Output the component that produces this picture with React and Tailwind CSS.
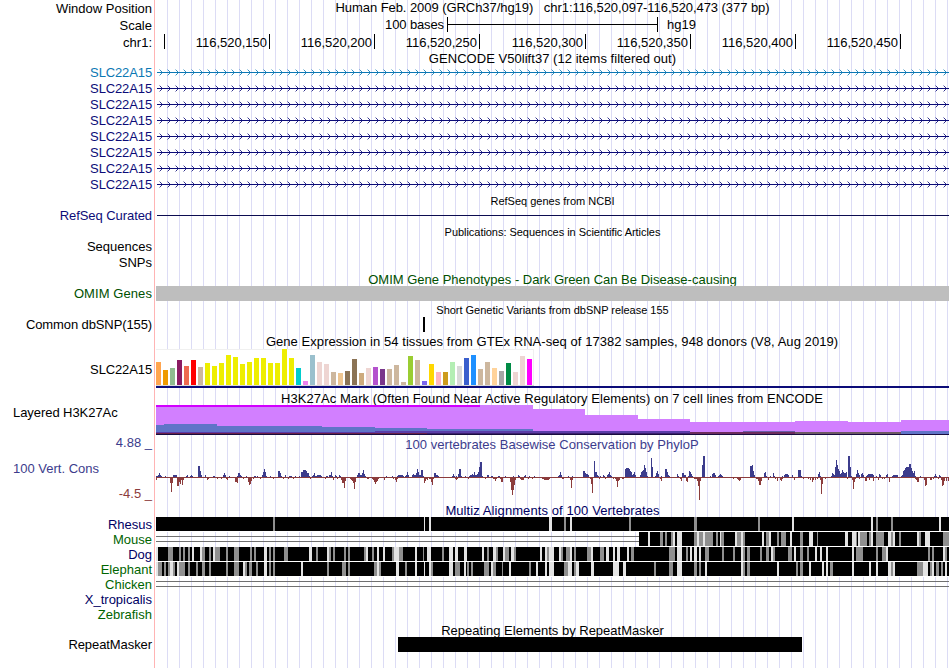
import clsx from 'clsx';

const LEFT = 156;

const TICKS = ['116,520,150', '116,520,200', '116,520,250', '116,520,300', '116,520,350', '116,520,400', '116,520,450'];

const GENES = ['#0c78b4', '#0c0c78', '#0c0c78', '#0c0c78', '#0c0c78', '#0c0c78', '#0c0c78', '#0c0c78'];

// [height, color] per tissue
const TISSUES = [
  [23, '#ffa54f'], [15, '#ee9a00'], [17, '#8fbc8f'], [25, '#8b1c62'], [19, '#ee6a50'], [25, '#ff0000'], [18, '#cdb79e'],
  [22, '#eeee00'], [19, '#eeee00'], [22, '#eeee00'], [30, '#eeee00'], [28, '#eeee00'], [21, '#eeee00'], [23, '#eeee00'],
  [27, '#eeee00'], [27, '#eeee00'], [22, '#eeee00'], [22, '#eeee00'], [36, '#eeee00'], [27, '#eeee00'], [17, '#00cdcd'],
  [4, '#ee82ee'], [30, '#9ac0cd'], [23, '#eed5d2'], [21, '#eed5d2'], [13, '#cdb79e'], [12, '#eec591'], [14, '#8b7355'],
  [26, '#8b7355'], [12, '#cdaa7d'], [17, '#eed5d2'], [18, '#b452cd'], [16, '#7a378b'], [16, '#cdb79e'], [20, '#cdb79e'],
  [3, '#cdb79e'], [29, '#9acd32'], [25, '#cdb79e'], [4, '#7a67ee'], [21, '#ffd700'], [13, '#ffb6c1'], [13, '#cd9b1d'],
  [23, '#b4eeb4'], [19, '#d9d9d9'], [27, '#3a5fcd'], [30, '#1e90ff'], [16, '#cdb79e'], [23, '#cdb79e'], [17, '#ffd39b'],
  [14, '#a6a6a6'], [22, '#008b45'], [13, '#eed5d2'], [29, '#eed5d2'], [26, '#ff00ff'],
];

// [x0, x1, y0, y1, color]
const H3K27 = [
  [156, 533, 405, 434, '#d27fff'], [533, 585, 409, 434, '#d27fff'], [585, 638, 415, 434, '#d27fff'],
  [638, 690, 419, 434, '#d27fff'], [690, 795, 422, 434, '#d27fff'], [795, 848, 421, 434, '#d27fff'],
  [848, 901, 422, 434, '#d27fff'], [901, 949, 420, 434, '#d27fff'], [156, 480, 405, 407, '#d200ff'],
  [156, 164, 425, 434, '#6074c8'], [164, 217, 424, 434, '#6074c8'], [217, 322, 426, 434, '#6074c8'],
  [322, 375, 427, 434, '#6074c8'], [375, 427, 428, 434, '#6074c8'], [427, 533, 429, 434, '#6074c8'],
  [585, 690, 431, 434, '#6074c8'], [743, 795, 431, 434, '#6a5aa8'], [795, 901, 432, 434, '#6c5864'],
  [901, 949, 431, 434, '#6074c8'],
  [156, 375, 432, 433, '#5a3ca8'], [375, 690, 431, 433, '#5a3ca8'], [690, 795, 432, 434, '#6c2c5c'],
  [156, 427, 433, 434, '#6c2048'], [427, 690, 433, 434, '#3c2070'], [156, 949, 434, 435, '#180c40'],
];

// x:height, positive above the axis
const CONS_UP = `156:1 157:1 158:2 159:4 160:2 161:1 165:1 173:2 174:2 175:2 176:2 186:1 187:2 190:1 191:2 192:1 198:11 199:11 200:6 201:2
205:2 213:1 214:1 223:2 224:4 225:2 229:1 237:1 238:4 239:4 240:2 241:1 246:1 254:1 255:1 257:1 262:2 263:5 264:8 265:5 266:1 270:1 278:6 279:6 280:4 281:1
285:2 289:1 290:1 291:1 295:1 299:1 301:5 302:5 303:7 304:7 305:7 306:6 307:4 308:4 309:1 312:1 313:2 314:4 315:1 316:1 317:2 318:2 319:2 320:2 321:1
326:1 327:1 329:2 330:2 331:5 332:1 335:2 336:1 339:2 340:1 357:2 358:4 359:4 360:2 361:2 362:4 363:7 364:3 365:1 386:1 392:1 397:1 398:2 399:2 400:2 401:2 402:2 403:1
405:1 406:2 407:5 408:2 412:2 413:3 414:2 415:2 416:4 417:8 418:5 419:2 420:2 421:7 422:7 423:1 434:4 435:4 436:2 437:2 438:1 452:1 453:3 454:1 456:1 458:3 459:8 460:8 461:1
465:1 469:1 470:2 471:2 472:3 473:2 474:5 475:2 476:2 477:3 478:5 479:10 480:15 481:15 482:1 487:2 488:2 491:1 492:1 498:1 499:1 505:1 513:1 518:2 519:1 524:1 525:2 529:1 534:1 558:1 559:2 560:5 561:2
568:1 572:1 583:6 584:6 585:4 586:3 587:3 588:2 594:16 595:5 596:5 597:2 598:1 600:1 603:2 604:1 607:2 608:3 609:5 610:2 611:1
625:8 626:9 627:9 628:9 629:8 630:6 631:5 632:2 633:3 634:5 635:2 640:2 641:5 642:6 643:7 644:12 645:9 646:5 647:1 651:19 652:10 655:1 656:4 657:6 658:3 661:1
665:8 666:8 667:5 668:2 669:1 677:3 678:1 682:4 683:4 684:2 685:2 688:1 689:6 690:5 691:3 692:1 702:12 703:21 704:21 710:1 712:3 713:4 714:4 715:2 718:1 719:2 720:3 721:2 722:1
750:11 751:11 752:12 753:6 754:2 764:4 765:5 766:1 770:1 773:4 774:1 782:1 784:2 785:3 786:3 787:3 788:2 792:2 798:7 799:7 800:7 801:1 818:3 819:5 820:1
831:1 832:4 833:3 834:2 835:10 836:17 837:12 838:8 839:6 840:3 841:4 842:7 843:5 844:4 845:4 846:5 848:21 849:21 850:10 851:1 856:3 857:7 858:4 859:2 861:3 862:4 863:2
866:1 867:2 868:3 869:3 870:3 871:3 872:3 873:2 876:1 879:3 880:2 886:2 887:3 892:1 893:2 894:2 895:2 896:2 897:2 901:1 902:2 903:6 904:7 905:9 906:10 907:10 908:10 909:13 910:13 911:9 912:6 913:4 914:6 915:1
920:1 934:1 935:3 936:1 939:2 940:1`;

const CONS_DOWN = `156:3 170:6 171:15 172:6 177:9 178:9 179:5 180:7 181:3 182:8 183:3 207:3 208:2 217:2 221:2 226:2 227:3 228:1 235:5 236:5 237:6 243:2 248:5 249:8 250:7 251:4 253:2
260:2 273:2 274:1 283:2 288:2 293:2 310:2 325:2 333:3 334:1 337:2 341:3 342:6 343:6 344:11 345:4 350:2 351:3 352:4 353:6 354:12 355:5 367:2 368:2 372:2 373:3 374:5 375:7 376:5 377:4 378:2 384:3
393:2 395:3 396:5 397:2 424:6 425:4 426:2 427:3 429:2 430:2 431:5 432:8 433:2 455:2 456:3 457:2 468:2 485:2 493:2 494:2 495:4 496:2 500:2 501:5 502:5 510:5 511:13 512:18 513:13 514:8 515:3 520:2 521:3 522:3 523:3
528:2 532:2 542:2 543:2 544:3 545:3 546:3 547:3 548:3 549:2 562:2 563:2 570:3 571:11 572:3 590:2 591:7 592:16 599:2 605:2 613:2 615:2 616:4 617:10 618:4 619:3 621:1 622:2 623:2 660:2 661:4 680:2 681:4 686:4 687:5
694:2 695:2 696:2 697:4 698:9 699:23 700:4 733:2 737:2 738:3 739:4 740:3 756:2 757:2 758:4 759:8 760:8 761:4 768:3 775:2 777:4 780:3 781:4 782:2 794:3 803:2 808:2 810:3 812:5 813:3 815:3 817:2 820:3 821:17 822:7 825:2
847:2 852:3 853:12 854:5 855:2 859:2 865:4 866:4 869:3 873:4 878:3 882:2 884:2 889:5 915:2 916:3 917:5 918:5 924:3 925:9 926:8 930:3 931:3 933:2 938:2 941:3 942:9 943:8 944:4 946:4 948:4`;

// m = partial identity, l = mismatch
const RHESUS = 'm273-275 l424-425 l429-431 l549-552 m564-566 l570-572 m629-631 m694-697 m758-760 l792-794 l871-873 m876-878 m891-893 l939-941';
const MOUSE = `l648-650 m660-663 m665-667 m671-673 l673-675 l677-682 m694-697 l697-699 m699-703 l703-705 m705-713 m716-718 l720-721 m721-724 l735-737 m737-741
l741-743 m743-745 l762-764 m766-769 l769-771 m777-779 m781-786 l790-792 m800-803 l809-813 m817-818 l845-848 l852-856 m856-857 l858-860 m860-867 m869-871 l871-873
m876-884 l888-891 m891-893 l893-895 m899-901 l917-919 m919-921 l925-930 m943-949`;
const DOG = `l156-158 m168-173 m179-181 m183-185 m188-190 l192-194 l200-202 m202-205 m209-211 l213-215 m215-220 m226-228 m234-239 m250-252 m254-256 l264-267 m269-271
m273-275 m284-288 l309-312 m316-318 l327-329 m329-331 m333-335 m344-346 m348-350 m364-366 l366-368 m372-374 l377-379 l383-385 m392-394 l394-399 m399-403 l415-417
m423-424 l427-431 m442-444 l449-453 l455-458 l464-467 l482-484 m487-489 l493-496 m496-498 l503-505 m505-509 l511-514 m514-516 l540-542 l545-547 m547-549 l549-554
l559-561 m561-563 m566-570 l570-572 m574-576 m587-591 l591-593 m600-604 l606-609 l613-615 l617-620 l627-629 m631-634 m669-675 l677-682 m686-688 l690-692 l694-697
l699-701 m705-709 m722-724 m733-735 l741-743 m743-745 m747-750 m760-762 m766-769 l771-773 m773-775 m788-792 l794-796 m800-803 m807-809 l815-817 l820-822 l826-828
l852-854 m856-863 m876-878 m882-886 l886-888 m928-930 m932-934 l943-945 m945-947`;
const ELEPHANT = `l156-158 m158-162 m164-166 m168-170 l170-173 m173-175 l177-179 m179-185 m188-190 m196-198 m202-205 m209-211 m226-228 m234-239 l243-245 m245-247
m249-252 m256-258 l264-267 m269-271 m273-275 l301-303 m327-329 m342-346 m348-350 m374-377 l377-379 m379-381 l396-399 m405-407 l415-417 l424-425 l429-431 m431-433
l449-453 m455-460 l464-466 m467-469 m471-473 m484-489 l491-493 m493-496 m502-503 l509-511 m529-531 l536-538 l545-547 l549-554 m564-568 l568-572 m574-576 l576-579
l591-594 l613-619 l623-626 m654-656 m669-673 l677-682 m694-697 m699-701 l705-707 l741-743 m743-745 m747-750 l777-779 m796-798 m800-803 l809-811 l822-824 l826-828
m830-833 l852-854 l869-871 l876-878 l888-891 m891-893 l893-895 m917-923 l923-928 m930-932 l932-934 m936-939 m941-943 l945-947`;

function Row({ label, className, labelClass, trackClass, children }) {
  return (
    <div className={clsx('flex', className)}>
      <div className={clsx('w-[155px] shrink-0 border-r border-[#ffb4b4] pr-[2px] text-right', labelClass)}>{label}</div>
      <div
        className={clsx(
          'ml-px w-[793px] shrink-0 bg-[repeating-linear-gradient(to_right,transparent_0px,transparent_11px,#dcdcf5_11px,#dcdcf5_12px)]',
          trackClass
        )}
      >
        {children}
      </div>
    </div>
  );
}

function Title({ label, labelClass, className, trackClass, small, children }) {
  return (
    <Row
      label={label}
      labelClass={labelClass}
      className={className}
      trackClass={clsx('text-center', small && 'pt-px text-[11px]', trackClass)}
    >
      {children}
    </Row>
  );
}

function GeneLine({ color }) {
  const xs = Array.from({ length: 99 }, (_, i) => 3 + i * 8);
  const inner = xs.map((x) => `M${x + 1} 5h1v1h1v1h-1v-1h-1zM${x + 2} 8h1v1h-1v1h-1v-1h1z`).join('');
  const outer = xs.map((x) => `M${x} 4h1v1h-1zM${x} 10h1v1h-1z`).join('');
  return (
    <svg width="793" height="16" className="block" shapeRendering="crispEdges">
      <path d={inner} fill={color} fillOpacity="0.85" />
      <path d={outer} fill={color} fillOpacity="0.35" />
      <rect x="1" y="7" width="792" height="1" fill={color} />
    </svg>
  );
}

function Alignment({ start = LEFT, data }) {
  return (
    <svg width="793" height="15" viewBox={`${LEFT} 0 793 15`} className="block" shapeRendering="crispEdges">
      <rect x={start} y="0" width={949 - start} height="15" fill="#fff" />
      <rect x={start} y="0" width={949 - start} height="14" fill="#000" />
      {start > LEFT && <path d={`M${LEFT} 4.5H${start}M${LEFT} 9.5H${start}`} stroke="#707070" />}
      {data.split(/\s+/).map((s) => {
        const [a, b] = s.slice(1).split('-').map(Number);
        return <rect key={s} x={a} y="0" width={b - a} height="14" fill={s[0] === 'm' ? '#8f8f8f' : '#e3e3e3'} />;
      })}
    </svg>
  );
}

function barsPath(text, dir) {
  return text
    .split(/\s+/)
    .map((s) => s.split(':').map(Number))
    .map(([x, h]) => (dir > 0 ? `M${x} 25v-${h}h1v${h}z` : `M${x} 25v${h}h1v-${h}z`))
    .join('');
}

function Conservation() {
  return (
    <svg width="793" height="51" viewBox={`${LEFT} 0 793 51`} className="block overflow-visible" shapeRendering="crispEdges">
      <rect x={LEFT} y="25" width="793" height="1" fill="#8c3c3c" />
      <path d={barsPath(CONS_UP, 1)} fill="#3c3c8c" />
      <path d={barsPath(CONS_DOWN, -1)} fill="#8c3c3c" />
    </svg>
  );
}

export default function App() {
  return (
    <div className="h-[668px] w-[950px] overflow-hidden bg-white font-['Liberation_Sans',Arial,sans-serif] text-[13px] leading-[15px] whitespace-pre text-black">
      <Row label="Window Position" className="h-[17px]" labelClass="pt-px" trackClass="text-center tracking-[-0.06px]">
        {'Human Feb. 2009 (GRCh37/hg19)   chr1:116,520,097-116,520,473 (377 bp)'}
      </Row>
      <Row label="Scale" className="h-[17px]" labelClass="pt-px" trackClass="flex">
        <div className="w-[288px] text-right tracking-[-0.12px]">100 bases</div>
        <div className="ml-[3px] flex h-[15px] w-[211px] items-center border-x border-black">
          <div className="h-px w-full bg-black" />
        </div>
        <div className="ml-[9px]">hg19</div>
      </Row>
      <Row label="chr1:" className="h-[17px]" labelClass="pt-px" trackClass="flex">
        <div className="h-[15px] w-[9px] border-r border-black" />
        {TICKS.map((t, i) => (
          <div
            key={t}
            className={clsx('h-[15px] border-r border-black pt-px pr-[2px] text-right', i === 3 ? 'w-[106px]' : 'w-[105px]')}
          >
            {t}
          </div>
        ))}
      </Row>
      <Title className="h-[14px]" trackClass="tracking-[0.04px]">GENCODE V50lift37 (12 items filtered out)</Title>

      {GENES.map((color, i) => (
        <Row
          key={i}
          label="SLC22A15"
          className="h-[16px]"
          labelClass={clsx('tracking-[-0.12px]', i === 0 ? 'text-[#0c78b4]' : 'text-[#0c0c78]')}
        >
          <GeneLine color={color} />
        </Row>
      ))}

      <Title small className="h-[15px]">RefSeq genes from NCBI</Title>
      <Row label="RefSeq Curated" className="h-[16px]" labelClass="tracking-[-0.07px] text-[#0c0c78]" trackClass="pt-[7px] pl-px">
        <div className="h-px bg-[#0c0c50]" />
      </Row>
      <Title small className="h-[15px]" trackClass="tracking-[-0.04px]">Publications: Sequences in Scientific Articles</Title>
      <Row label="Sequences" className="h-[16px]" />
      <Row label="SNPs" className="h-[16px]" />
      <Title className="h-[15px] text-[#005000]" trackClass="pt-px">OMIM Gene Phenotypes - Dark Green Can Be Disease-causing</Title>
      <Row label="OMIM Genes" className="h-[16px]" labelClass="tracking-[0.08px] text-[#005000]">
        <div className="h-[15px] bg-[#bebebe]" />
      </Row>
      <Title small className="h-[15px]" trackClass="tracking-[-0.02px]">Short Genetic Variants from dbSNP release 155</Title>
      <Row label="Common dbSNP(155)" className="h-[16px]" labelClass="tracking-[-0.11px]" trackClass="pl-[267px]">
        <div className="h-[15px] w-[2px] bg-black" />
      </Row>

      <Title className="h-[15px]" trackClass="pt-px pr-px tracking-[0.055px]">
        Gene Expression in 54 tissues from GTEx RNA-seq of 17382 samples, 948 donors (V8, Aug 2019)
      </Title>
      <Row label="SLC22A15" className="h-[42px]" labelClass="pt-[14px] tracking-[-0.12px]">
        <svg width="793" height="42" className="block" shapeRendering="crispEdges">
          <rect x="0" y="1" width="378" height="37" fill="#f0f0f0" />
          <rect x="0" y="2" width="377" height="35" fill="#fff" />
          <rect x="0" y="37" width="378" height="1" fill="#d8d8d8" />
          {TISSUES.map(([h, fill], i) => (
            <rect key={i} x={i * 7} y={37 - h} width="5" height={h} fill={fill} />
          ))}
          <rect x="0" y="38" width="793" height="2" fill="#0c0c78" />
        </svg>
      </Row>

      <Title className="h-[15px]" trackClass="pt-px pr-px tracking-[0.05px]">
        H3K27Ac Mark (Often Found Near Active Regulatory Elements) on 7 cell lines from ENCODE
      </Title>
      <Row label="Layered H3K27Ac" className="h-[30px]" labelClass="pl-[13px] !text-left tracking-[-0.06px]">
        <svg width="793" height="30" viewBox="156 405 793 30" className="block" shapeRendering="crispEdges">
          {H3K27.map(([x0, x1, y0, y1, fill], i) => (
            <rect key={i} x={x0} y={y0} width={x1 - x0} height={y1 - y0} fill={fill} />
          ))}
        </svg>
      </Row>

      <Title label="4.88 _" labelClass="text-[#3c3c8c]" className="h-[17px] text-[#3c3c8c]" trackClass="pt-[2px] pr-px tracking-[0.03px]">
        100 vertebrates Basewise Conservation by PhyloP
      </Title>
      <Row
        className="h-[51px]"
        labelClass="flex flex-col justify-between pt-[9px] pb-[2px]"
        label={
          <>
            <div className="pl-[13px] text-left text-[#3c3c8c]">100 Vert. Cons</div>
            <div className="text-[#8c3c3c]">-4.5 _</div>
          </>
        }
      >
        <Conservation />
      </Row>

      <Title className="h-[14px] text-[#000064]" trackClass="tracking-[0.09px]">Multiz Alignments of 100 Vertebrates</Title>
      <Row label="Rhesus" className="h-[15px]" labelClass="text-[#000064]">
        <Alignment data={RHESUS} />
      </Row>
      <Row label="Mouse" className="h-[15px]" labelClass="text-[#006400]">
        <Alignment data={MOUSE} start={639} />
      </Row>
      <Row label="Dog" className="h-[15px]" labelClass="text-[#000064]">
        <Alignment data={DOG} />
      </Row>
      <Row label="Elephant" className="h-[15px]" labelClass="text-[#006400]">
        <Alignment data={ELEPHANT} />
      </Row>
      <Row label="Chicken" className="h-[15px]" labelClass="text-[#006400]" trackClass="pt-[4px]">
        <div className="h-[6px] border-y border-[#707070]" />
      </Row>
      <Row label="X_tropicalis" className="h-[15px]" labelClass="text-[#000064]" />
      <Row label="Zebrafish" className="h-[15px]" labelClass="text-[#006400]" />

      <Title className="h-[15px]" trackClass="pt-px">Repeating Elements by RepeatMasker</Title>
      <Row label="RepeatMasker" className="h-[31px]" labelClass="tracking-[-0.08px]" trackClass="pl-[242px]">
        <div className="h-[15px] w-[404px] bg-black" />
      </Row>
    </div>
  );
}
